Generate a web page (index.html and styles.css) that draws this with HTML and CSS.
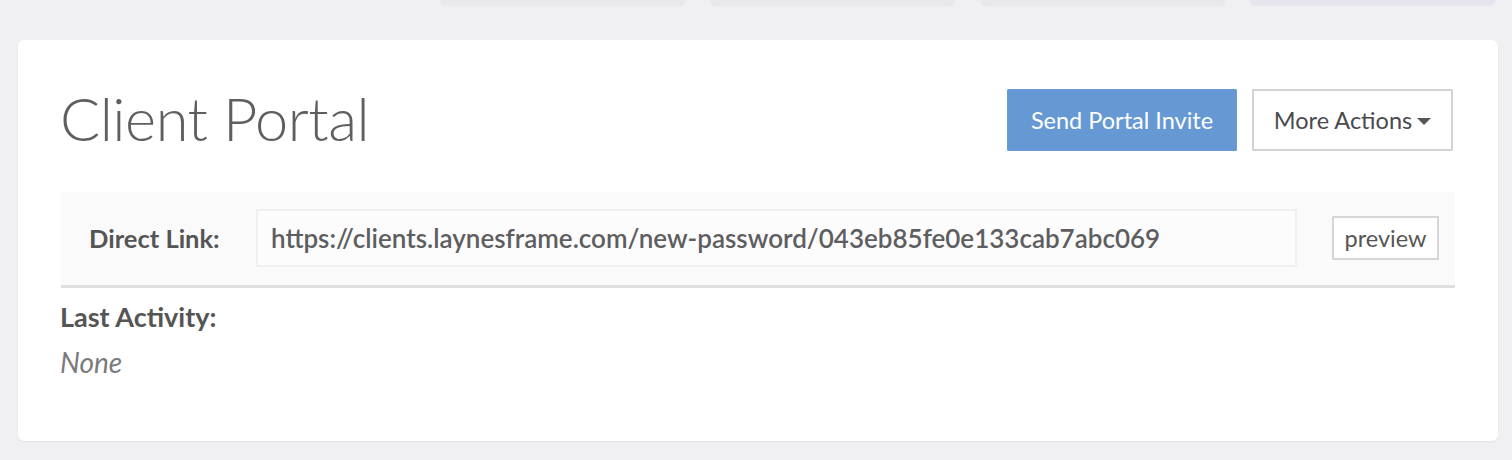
FILE: index.html
```html
<!DOCTYPE html>
<html lang="en">
<head>
<meta charset="utf-8">
<title>Client Portal</title>
<link rel="stylesheet" href="styles.css">
</head>
<body>
  <div class="tabs">
    <div class="tab"></div>
    <div class="tab"></div>
    <div class="tab"></div>
    <div class="tab tab-active"></div>
  </div>
  <section class="card">
    <header class="card-header">
      <h1 class="title">Client Portal</h1>
      <div class="actions">
        <button class="btn btn-primary">Send Portal Invite</button>
        <button class="btn btn-default">More Actions <span class="caret"></span></button>
      </div>
    </header>
    <div class="link-row">
      <span class="link-label">Direct Link:</span>
      <div class="link-input">https://clients.laynesframe.com/new-password/043eb85fe0e133cab7abc069</div>
      <button class="btn-preview">preview</button>
    </div>
    <div class="activity">
      <div class="activity-label">Last Activity:</div>
      <div class="activity-value">None</div>
    </div>
  </section>
</body>
</html>
```

FILE: styles.css
```css
* { box-sizing: border-box; }
html, body { margin: 0; padding: 0; }
body {
  background: #f0eff2;
  font-family: "Lato", "Liberation Sans", sans-serif;
  color: #555;
  height: 460px;
  overflow: hidden;
}
.tabs {
  display: flex;
  justify-content: flex-end;
  gap: 25px;
  padding-right: 17px;
  height: 40px;
}
.tab {
  width: 245px;
  height: 5px;
  background: #e9e8eb;
  border-radius: 0 0 6px 6px;
  box-shadow: 0 1px 2px rgba(0,0,0,0.04);
}
.tab-active { background: #e6e4ee; }
.card {
  margin: 0 14px 0 18px;
  height: 401px;
  background: #fff;
  border-radius: 6px;
  box-shadow: 0 1px 2px rgba(0,0,0,0.06);
  padding: 49px 45px 0 42px;
}
.card-header {
  display: flex;
  justify-content: space-between;
  align-items: center;
  height: 62px;
}
.title {
  margin: 0;
  font-weight: 300;
  font-size: 59.5px;
  color: #5f5f62;
  letter-spacing: -0.5px;
  margin-top: -4px;
}
.actions { display: flex; gap: 15px; }
.btn {
  font-family: inherit;
  height: 62px;
  font-size: 23.5px;
  border-radius: 1px;
  cursor: pointer;
  white-space: nowrap;
  padding: 0;
}
.btn-primary {
  width: 230px;
  background: #6699d3;
  border: 1px solid #6a9cd6;
  color: #fff;
}
.btn-default {
  width: 201px;
  background: #fff;
  border: 2px solid #d3d3d6;
  color: #4a4a4d;
  display: flex;
  align-items: center;
  justify-content: center;
  gap: 5px;
}
.caret {
  display: inline-block;
  width: 0; height: 0;
  border-left: 7px solid transparent;
  border-right: 7px solid transparent;
  border-top: 7px solid #555;
  margin-top: 2px;
}
.link-row {
  margin-top: 41px;
  margin-left: 1px;
  margin-right: -2px;
  display: flex;
  align-items: center;
  gap: 35px;
  padding: 17px 16px 18px 28px;
  background: #fafafb;
  border-bottom: 3px solid #dfdfe2;
}
.link-label {
  font-weight: 700;
  font-size: 25.5px;
  color: #555;
  white-space: nowrap;
  width: 132px;
}
.link-input {
  flex: 1;
  height: 58px;
  display: flex;
  align-items: center;
  padding-left: 13px;
  border: 2px solid #f0f0f2;
  background: #fcfcfd;
  font-size: 26px;
  font-weight: 600;
  color: #5e5e61;
  white-space: nowrap;
  overflow: hidden;
}
.btn-preview {
  font-family: inherit;
  width: 107px;
  height: 44px;
  background: #fff;
  border: 2px solid #d6d6d9;
  font-size: 23.5px;
  color: #555;
  padding: 0;
}
.activity { padding-top: 12px; }
.activity-label {
  font-weight: 700;
  font-size: 27px;
  color: #555;
}
.activity-value {
  margin-top: 12px;
  font-style: italic;
  font-size: 28px;
  color: #7a7a7d;
}
```
